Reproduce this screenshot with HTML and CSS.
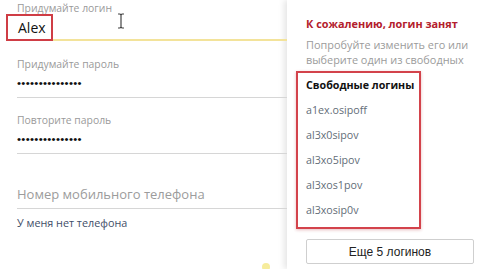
FILE: index.html
```html
<!DOCTYPE html>
<html lang="ru">
<head>
    <meta charset="UTF-8">
    <title>Регистрация</title>
    <link rel="stylesheet" href="styles.css">
</head>
<body>
    <div id="page">
        <div id="form">
            <div class="field login">
                <div class="label">Придумайте логин</div>
                <div class="value">Alex</div>
                <div class="mark"></div>
                <svg class="cursor" width="8" height="16" viewBox="0 0 8 16">
                    <path d="M1 1h2l1 1 1-1h2M4 2v12M1 15h2l1-1 1 1h2" fill="none" stroke="#444" stroke-width="1.2"/>
                </svg>
            </div>
            <div class="field pass">
                <div class="label">Придумайте пароль</div>
                <div class="value dots">•••••••••••••••</div>
            </div>
            <div class="field pass2">
                <div class="label">Повторите пароль</div>
                <div class="value dots">•••••••••••••••</div>
            </div>
            <div class="field phone">
                <div class="value hint">Номер мобильного телефона</div>
            </div>
            <div class="nophone">У меня нет телефона</div>
        </div>
        <div id="popup">
            <div class="title">К сожалению, логин занят</div>
            <div class="sub">Попробуйте изменить его или выберите один из свободных</div>
            <div class="free">
                <div class="head">Свободные логины</div>
                <div class="item">a1ex.osipoff</div>
                <div class="item">al3x0sipov</div>
                <div class="item">al3xo5ipov</div>
                <div class="item">al3xos1pov</div>
                <div class="item">al3xosip0v</div>
            </div>
            <div class="more">Еще 5 логинов</div>
        </div>
    </div>
    <div class="blob"></div>
</body>
</html>
```

FILE: styles.css
```css
*{
    margin: 0;
    padding: 0;
    box-sizing: border-box;
    font-family: 'Open Sans', 'Noto Sans', sans-serif;
}
html,body{
    width: 100%;
    height: 100%;
    overflow: hidden;
    background-color: #fff;
}
#page{
    display: flex;
    width: 480px;
    height: 269px;
}
#form{
    width: 287px;
    padding-left: 17px;
    flex-shrink: 0;
}
.field{
    position: relative;
    border-bottom: 1px solid #d6d6d6;
}
.label{
    font-size: 10.4px;
    line-height: 12px;
    color: #9a9a9a;
}
.value{
    font-size: 14px;
    line-height: 23px;
    color: #111;
}
.dots{
    font-family: 'Liberation Sans', sans-serif;
    font-size: 11.5px;
    line-height: 27px;
    letter-spacing: 0.3px;
}
.login{
    padding-top: 2px;
    border-bottom: 2px solid #f3e39a;
}
.login .value{
    padding-left: 1px;
    padding-top: 2px;
}
.pass{
    margin-top: 17px;
}
.pass2{
    margin-top: 16px;
}
.phone{
    margin-top: 27px;
}
.hint{
    font-size: 13px;
    line-height: 27px;
    color: #9c9c9c;
}
.nophone{
    margin-top: 7px;
    font-size: 10.8px;
    line-height: 14px;
    color: #3f4e68;
}
.mark{
    position: absolute;
    left: -11px;
    top: 14px;
    width: 47px;
    height: 27px;
    border: 2px solid #cf3d45;
}
.cursor{
    position: absolute;
    left: 100px;
    top: 13px;
}
#popup{
    flex: 1;
    padding-top: 17px;
    box-shadow: -3px 0 6px rgba(0,0,0,0.1);
    background-color: #fff;
}
.title{
    padding-left: 19px;
    font-size: 10.9px;
    line-height: 14px;
    font-weight: 700;
    color: #b3202c;
}
.sub{
    margin-top: 6px;
    padding-left: 19px;
    width: 190px;
    font-size: 10.9px;
    line-height: 15px;
    color: #9b9b9b;
}
.free{
    margin-top: 4px;
    margin-left: 9px;
    width: 125px;
    height: 158px;
    padding: 5px 0 0 8px;
    border: 2px solid #d3434b;
    box-shadow: 0 1px 3px rgba(180,40,50,0.3);
}
.head{
    font-size: 10.7px;
    line-height: 14px;
    font-weight: 700;
    color: #111;
    margin-bottom: 6px;
}
.item{
    font-size: 10.7px;
    line-height: 25px;
    color: #636d77;
}
.more{
    margin-top: 10px;
    margin-left: 19px;
    width: 168px;
    height: 25px;
    border: 1px solid #cfcfcf;
    border-radius: 2px;
    display: flex;
    align-items: center;
    justify-content: center;
    font-family: 'Liberation Sans', sans-serif;
    font-size: 12px;
    color: #222;
}
.blob{
    position: absolute;
    left: 262px;
    top: 263px;
    width: 8px;
    height: 8px;
    border-radius: 50%;
    background-color: #f6ec9c;
}
```
